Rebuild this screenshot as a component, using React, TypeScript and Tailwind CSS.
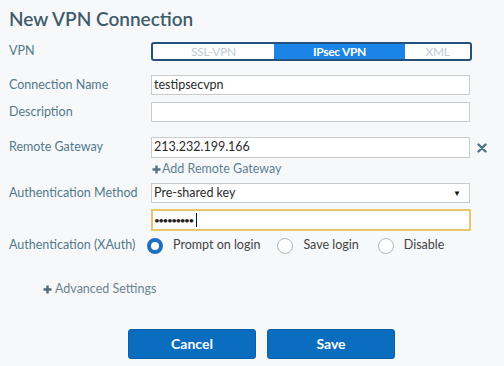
import React from "react";

const labelCls = "w-[142px] shrink-0 text-[12.5px] text-[#52788a]";
const inputCls =
  "w-[319px] h-[20px] bg-white border border-[#c9cccf] px-[2px] text-[12.5px] text-[#2b2b2b] flex items-center";

const Plus: React.FC<{ color: string }> = ({ color }) => (
  <svg width="9" height="9" viewBox="0 0 9 9" className="shrink-0">
    <path d="M4.5 0.5 V8.5 M0.5 4.5 H8.5" stroke={color} strokeWidth="2.4" />
  </svg>
);

const Radio: React.FC<{ checked?: boolean; label: string }> = ({ checked, label }) => (
  <div className="flex items-center">
    {checked ? (
      <span className="w-[16px] h-[16px] rounded-full border-[4px] border-[#1d6fc0] bg-white" />
    ) : (
      <span className="w-[16px] h-[16px] rounded-full border border-[#a9bac6] bg-white" />
    )}
    <span className="ml-[10px] text-[12.5px] text-[#444]">{label}</span>
  </div>
);

export default function App() {
  return (
    <div
      className="w-[504px] h-[366px] bg-[#f7f8fa] pl-[9px] flex flex-col overflow-hidden"
      style={{ fontFamily: "Lato, 'Open Sans', sans-serif" }}
    >
      {/* Title */}
      <div className="mt-[6px] h-[26px] leading-[26px] text-[19px] font-semibold text-[#3f5b6a]">
        New VPN Connection
      </div>

      {/* VPN type */}
      <div className="mt-[10px] flex items-center h-[19px]">
        <span className={labelCls}>VPN</span>
        <div className="w-[321px] h-[19px] flex rounded-[3px] border-2 border-[#24507e] overflow-hidden bg-white text-[12px] tracking-[-0.3px]">
          <div className="w-[121px] flex items-center justify-center text-[#bccbd6]">SSL-VPN</div>
          <div className="w-[131px] flex items-center justify-center bg-[#1b84e7] text-white font-bold">
            IPsec VPN
          </div>
          <div className="flex-1 flex items-center justify-center text-[#bccbd6]">XML</div>
        </div>
      </div>

      {/* Connection name */}
      <div className="mt-[14px] flex items-center">
        <span className={labelCls}>Connection Name</span>
        <div className={inputCls}>testipsecvpn</div>
      </div>

      {/* Description */}
      <div className="mt-[7px] flex items-center">
        <span className={labelCls}>Description</span>
        <div className={inputCls}></div>
      </div>

      {/* Remote gateway */}
      <div className="mt-[15px] flex items-center">
        <span className={labelCls}>Remote Gateway</span>
        <div className={inputCls + " h-[21px]"}>213.232.199.166</div>
        <svg width="10" height="10" viewBox="0 0 10 10" className="ml-[7px]">
          <path d="M1.5 1.5 L8.5 8.5 M8.5 1.5 L1.5 8.5" stroke="#4d7286" strokeWidth="2.4" strokeLinecap="round" />
        </svg>
      </div>
      <div className="mt-[3px] ml-[143px] h-[16px] text-[12.5px] text-[#5c8194] flex items-center gap-[1px]">
        <Plus color="#4f7587" />
        <span>Add Remote Gateway</span>
      </div>

      {/* Authentication method */}
      <div className="mt-[6px] flex items-center">
        <span className={labelCls}>Authentication Method</span>
        <div className={inputCls + " justify-between pr-[8px]"}>
          <span>Pre-shared key</span>
          <span className="text-[8px] text-[#111]">▼</span>
        </div>
      </div>
      <div className="mt-[6px] ml-[142px] w-[320px] h-[22px] bg-white border-2 border-[#e8c56d] flex items-center px-[1px]">
        <span className="text-[10px] text-[#222] tracking-[-1.5px] leading-none">•••••••••</span>
        <span className="ml-[3px] w-px h-[14px] bg-[#111]" />
      </div>

      {/* XAuth */}
      <div className="mt-[6px] flex items-center h-[17px]">
        <span className="w-[138px] shrink-0 text-[12.5px] text-[#52788a]">Authentication (XAuth)</span>
        <Radio checked label="Prompt on login" />
        <div className="ml-[17px]">
          <Radio label="Save login" />
        </div>
        <div className="ml-[19px]">
          <Radio label="Disable" />
        </div>
      </div>

      {/* Advanced */}
      <div className="mt-[26px] ml-[34px] flex items-center gap-[3px] text-[12.5px] text-[#6b8391]">
        <Plus color="#4f6b7a" />
        <span>Advanced Settings</span>
      </div>

      {/* Buttons */}
      <div className="mt-[30px] ml-[119px] flex gap-[11px]">
        <button className="w-[128px] h-[30px] rounded-[3px] bg-[#0b6dc0] border border-[#0a5ea8] text-white text-[14px] font-bold">
          Cancel
        </button>
        <button className="w-[128px] h-[30px] rounded-[3px] bg-[#0b6dc0] border border-[#0a5ea8] text-white text-[14px] font-bold">
          Save
        </button>
      </div>
    </div>
  );
}
